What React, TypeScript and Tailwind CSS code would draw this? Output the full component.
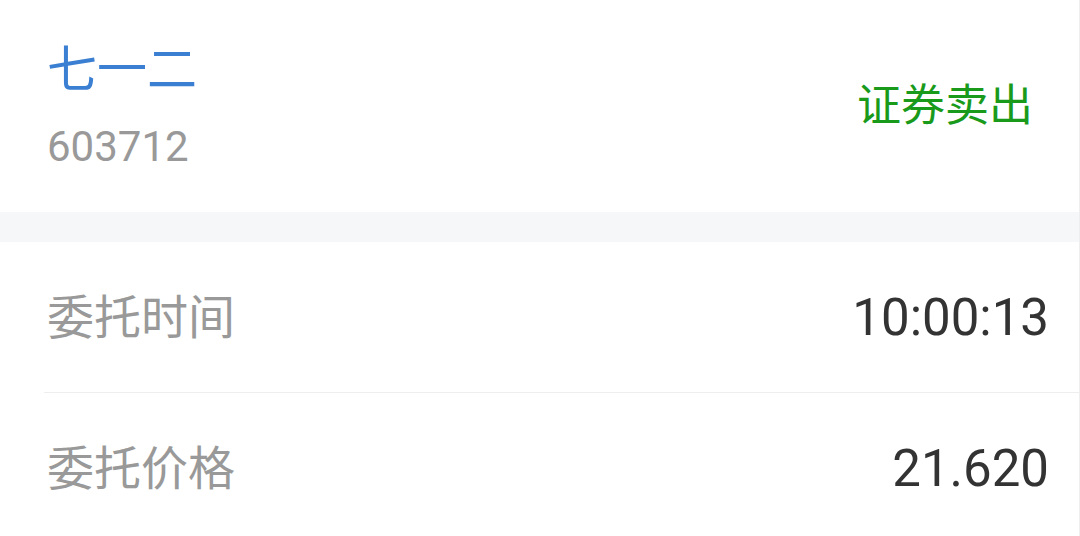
const CJK = "font-['Roboto','Noto_Sans_CJK_SC',sans-serif]";

function InfoRow({ label, value, divider }: { label: string; value: string; divider?: boolean }) {
  return (
    <div className="pl-[44px]">
      <div className={`flex h-[151px] items-center justify-between pr-[30px] ${divider ? "border-b border-[#eeeeee]" : ""}`}>
        <span className="pl-[3px] text-[47px] leading-none text-[#999999]">{label}</span>
        <span className="text-[51px] leading-none text-[#333333]">{value}</span>
      </div>
    </div>
  );
}

export default function App() {
  return (
    <div className={`h-[536px] w-[1080px] overflow-hidden border-r border-[#eeeeee] bg-white ${CJK}`}>
      <div className="flex h-[212px] items-center justify-between pl-[47px] pr-[46px]">
        <div className="flex flex-col">
          <span className="text-[50px] leading-[60px] text-[#3b7fd2]">七一二</span>
          <span className="mt-[22px] text-[42px] leading-[50px] text-[#999999]">603712</span>
        </div>
        <span className="text-[44px] leading-none text-[#1a9a1a]">证券卖出</span>
      </div>
      <div className="h-[30px] bg-[#f6f7f9]" />
      <InfoRow label="委托时间" value="10:00:13" divider />
      <InfoRow label="委托价格" value="21.620" />
    </div>
  );
}
